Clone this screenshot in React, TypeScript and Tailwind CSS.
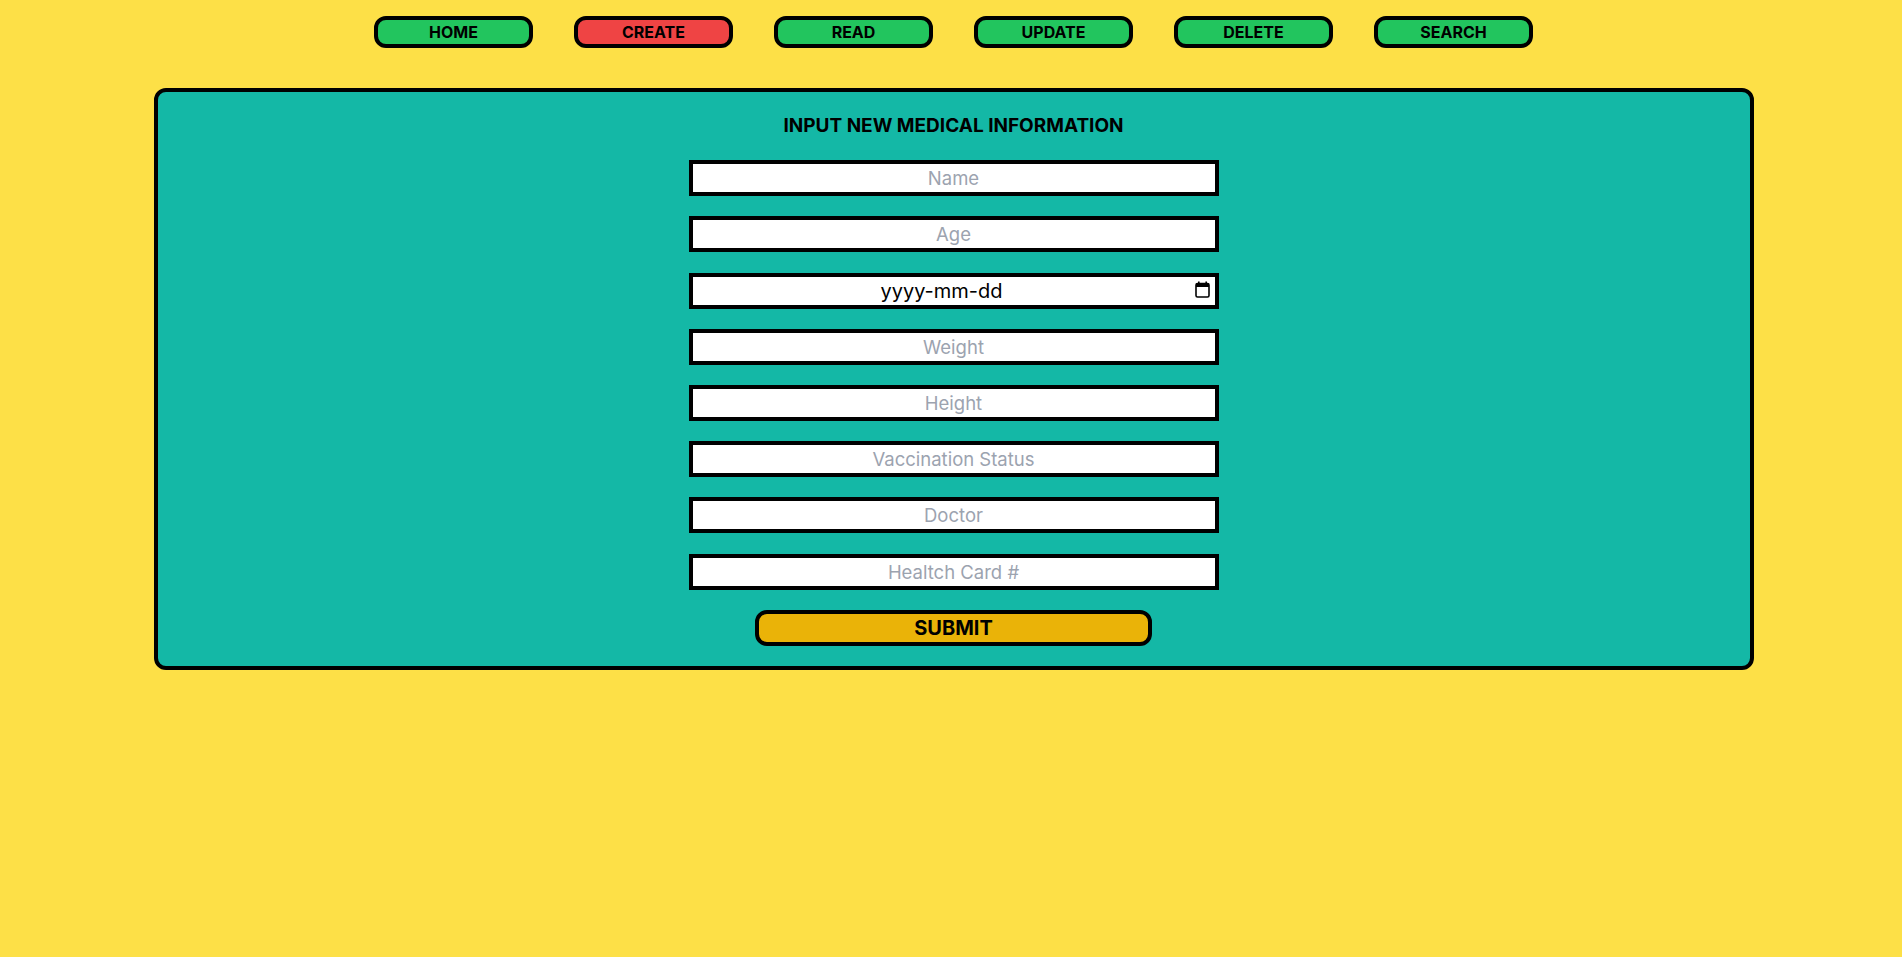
import React from 'react';

const navItems = ['HOME', 'CREATE', 'READ', 'UPDATE', 'DELETE', 'SEARCH'];

const fieldsBefore = ['Name', 'Age'];
const fieldsAfter = ['Weight', 'Height', 'Vaccination Status', 'Doctor', 'Healtch Card #'];

function CalendarIcon() {
  return (
    <svg width="15" height="17" viewBox="0 0 15 17" fill="none">
      <rect x="3" y="0.5" width="1.6" height="3" fill="#000" />
      <rect x="10.4" y="0.5" width="1.6" height="3" fill="#000" />
      <rect x="1" y="2.5" width="13" height="13.5" rx="1.5" stroke="#000" strokeWidth="1.6" fill="none" />
      <rect x="1" y="2.5" width="13" height="3.5" fill="#000" />
    </svg>
  );
}

function TextField({ placeholder }: { placeholder: string }) {
  return (
    <input
      type="text"
      placeholder={placeholder}
      className="w-[530px] h-9 border-4 border-black bg-white text-center text-[18.5px] leading-7 text-black placeholder-[#9ca3af] outline-none"
    />
  );
}

export default function App() {
  return (
    <div className="min-h-screen bg-[#fde047] pt-4 pl-[5px]" style={{ fontFamily: 'Inter, "Noto Sans", sans-serif' }}>
      <nav className="flex justify-center gap-[41px]">
        {navItems.map((item) => (
          <button
            key={item}
            className={`w-[159px] h-8 rounded-xl border-4 border-black text-base font-bold text-black flex items-center justify-center ${
              item === 'CREATE' ? 'bg-[#ef4444]' : 'bg-[#22c55e]'
            }`}
          >
            {item}
          </button>
        ))}
      </nav>

      <div className="mx-auto mt-10 w-[1600px] rounded-xl border-4 border-black bg-[#14b8a6] p-5 flex flex-col items-center gap-[20.2px]">
        <h1 className="text-[19px] leading-7 font-bold text-black">INPUT NEW MEDICAL INFORMATION</h1>
        {fieldsBefore.map((f) => (
          <TextField key={f} placeholder={f} />
        ))}
        <div className="relative w-[530px] h-9 border-4 border-black bg-white flex items-center justify-center pr-6">
          <span className="text-[20px] leading-7 text-black">yyyy-mm-dd</span>
          <span className="absolute right-[5px] top-[4px]">
            <CalendarIcon />
          </span>
        </div>
        {fieldsAfter.map((f) => (
          <TextField key={f} placeholder={f} />
        ))}
        <button className="w-[397px] h-9 rounded-xl border-4 border-black bg-[#eab308] text-xl font-bold text-black">
          SUBMIT
        </button>
      </div>
    </div>
  );
}
